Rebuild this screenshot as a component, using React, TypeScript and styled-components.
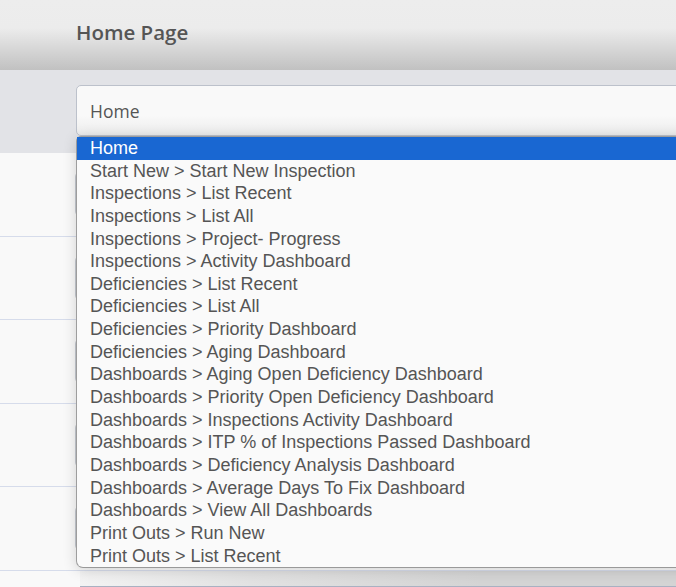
import styled, { createGlobalStyle } from 'styled-components';

const GlobalStyle = createGlobalStyle`
  html, body {
    margin: 0;
    padding: 0;
    overflow: hidden;
    background: #f9f9f9;
  }
`;

const Page = styled.div`
  position: relative;
  width: 676px;
  height: 587px;
  overflow: hidden;
  font-family: 'Open Sans', 'Liberation Sans', sans-serif;
  color: #555;
`;

const Header = styled.header`
  height: 70px;
  display: flex;
  align-items: center;
  padding: 0 0 6px 76px;
  box-sizing: border-box;
  background: linear-gradient(#ededed 0%, #ececec 40%, #c1c1c1 100%);
  h1 {
    margin: 0;
    font-size: 20.5px;
    font-weight: 600;
    color: #555;
  }
`;

const SelectBand = styled.div`
  height: 83px;
  background: #e2e3e7;
  padding: 15px 0 0 76px;
  box-sizing: border-box;
`;

const SelectBox = styled.div`
  width: 700px;
  height: 51px;
  box-sizing: border-box;
  border: 1px solid #bcc1cb;
  border-radius: 5px;
  background: linear-gradient(#f9f9f9 60%, #ececec 100%);
  display: flex;
  align-items: center;
  padding-left: 13px;
  font-size: 17.5px;
  color: #555;
`;

const Row = styled.div`
  height: 83.5px;
  box-sizing: border-box;
  border-bottom: 1px solid #d6dceb;
  display: flex;
  align-items: center;
  padding-left: 75px;
`;

const Field = styled.div`
  width: 600px;
  height: 44px;
  border: 1px solid #c4c8d0;
  border-radius: 6px;
  background: #f7f7f7;
`;

const Footer = styled.div`
  margin-left: 80px;
  height: 15px;
  background: linear-gradient(to right, #f3f3f3 0%, #e2e2e2 170px, #d4d4d4 400px);
  border-bottom: 1px solid #a9b1c2;
`;

const Dropdown = styled.ul`
  position: absolute;
  left: 76px;
  top: 136px;
  width: 700px;
  margin: 0;
  padding: 0;
  list-style: none;
  background: #fafafa;
  border: 1px solid #9d9d9d;
  border-bottom-color: #999;
  border-radius: 5px 0 0 7px;
  box-shadow: 0 2px 14px rgba(0, 0, 0, 0.16);
  font-family: 'Liberation Sans', Arial, sans-serif;
  font-size: 18px;
`;

const Option = styled.li<{ $selected?: boolean }>`
  height: 22.65px;
  line-height: 22.65px;
  padding: 0 13px;
  white-space: nowrap;
  color: ${(p) => (p.$selected ? '#fff' : '#555')};
  background: ${(p) => (p.$selected ? '#1967d2' : 'transparent')};
`;

const options = [
  'Home',
  'Start New > Start New Inspection',
  'Inspections > List Recent',
  'Inspections > List All',
  'Inspections > Project- Progress',
  'Inspections > Activity Dashboard',
  'Deficiencies > List Recent',
  'Deficiencies > List All',
  'Deficiencies > Priority Dashboard',
  'Deficiencies > Aging Dashboard',
  'Dashboards > Aging Open Deficiency Dashboard',
  'Dashboards > Priority Open Deficiency Dashboard',
  'Dashboards > Inspections Activity Dashboard',
  'Dashboards > ITP % of Inspections Passed Dashboard',
  'Dashboards > Deficiency Analysis Dashboard',
  'Dashboards > Average Days To Fix Dashboard',
  'Dashboards > View All Dashboards',
  'Print Outs > Run New',
  'Print Outs > List Recent',
];

const App = () => {
  return (
    <Page>
      <GlobalStyle />
      <Header>
        <h1>Home Page</h1>
      </Header>
      <SelectBand>
        <SelectBox>Home</SelectBox>
      </SelectBand>
      {[0, 1, 2, 3, 4].map((i) => (
        <Row key={i}>
          <Field />
        </Row>
      ))}
      <Footer />
      {/* native select popup, open */}
      <Dropdown>
        {options.map((o, i) => (
          <Option key={o} $selected={i === 0}>
            {o}
          </Option>
        ))}
      </Dropdown>
    </Page>
  );
};

export default App;
